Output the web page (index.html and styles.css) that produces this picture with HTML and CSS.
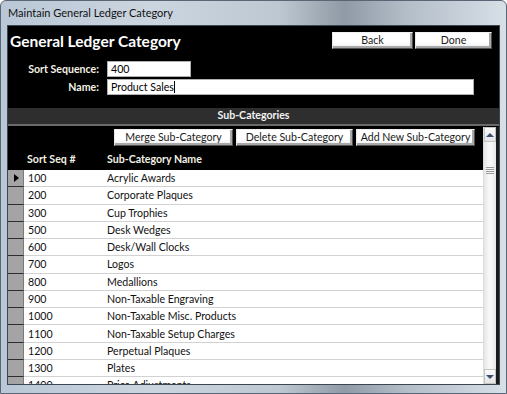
FILE: index.html
```html
<!DOCTYPE html>
<html lang="en">
<head>
    <meta charset="UTF-8">
    <title>Maintain General Ledger Category</title>
    <link rel="stylesheet" href="styles.css">
</head>
<body>
    <div class="window">
        <div class="titlebar">Maintain General Ledger Category</div>
        <div class="client">
            <div class="header">
                <div class="header-top">
                    <h1 class="form-title">General Ledger Category</h1>
                    <div class="nav-buttons">
                        <button class="btn btn-back">Back</button>
                        <button class="btn btn-done">Done</button>
                    </div>
                </div>
                <div class="field">
                    <label class="field-label">Sort Sequence:</label>
                    <div class="field-input input-short">400</div>
                </div>
                <div class="field">
                    <label class="field-label">Name:</label>
                    <div class="field-input input-long">Product Sales<span class="caret"></span></div>
                </div>
            </div>

            <div class="section-bar">Sub-Categories</div>

            <div class="subform">
                <div class="subform-main">
                    <div class="toolbar">
                        <button class="btn btn-merge">Merge Sub-Category</button>
                        <button class="btn btn-delete">Delete Sub-Category</button>
                        <button class="btn btn-add">Add New Sub-Category</button>
                    </div>
                    <div class="col-headers">
                        <span class="col-seq">Sort Seq #</span>
                        <span class="col-name">Sub-Category Name</span>
                    </div>
                    <div class="rows" id="rows"></div>
                </div>
                <div class="scrollbar">
                    <div class="sb-btn sb-up"><span class="tri-up"></span></div>
                    <div class="sb-track">
                        <div class="sb-thumb"><span class="grip"></span></div>
                    </div>
                    <div class="sb-btn sb-down"><span class="tri-down"></span></div>
                </div>
            </div>
        </div>
    </div>

    <script>
        const items = [
            ["100", "Acrylic Awards"],
            ["200", "Corporate Plaques"],
            ["300", "Cup Trophies"],
            ["500", "Desk Wedges"],
            ["600", "Desk/Wall Clocks"],
            ["700", "Logos"],
            ["800", "Medallions"],
            ["900", "Non-Taxable Engraving"],
            ["1000", "Non-Taxable Misc. Products"],
            ["1100", "Non-Taxable Setup Charges"],
            ["1200", "Perpetual Plaques"],
            ["1300", "Plates"],
            ["1400", "Price Adjustments"]
        ];

        const rows = document.getElementById("rows");
        items.forEach((item, i) => {
            const row = document.createElement("div");
            row.className = "row" + (i === 0 ? " current" : "");
            row.innerHTML =
                '<span class="selector"></span>' +
                '<span class="cell cell-seq">' + item[0] + '</span>' +
                '<span class="cell cell-name">' + item[1] + '</span>';
            rows.appendChild(row);
        });
    </script>
</body>
</html>
```

FILE: styles.css
```css
* {
    margin: 0;
    padding: 0;
    box-sizing: border-box;
}

body {
    width: 507px;
    height: 394px;
    overflow: hidden;
    background: #fff;
    font-family: Lato, "Open Sans", sans-serif;
    font-size: 10.6px;
}

.window {
    width: 507px;
    height: 394px;
    display: flex;
    flex-direction: column;
    padding: 0 6px 8px 6px;
    border: 1px solid #5a6675;
    border-radius: 6px 6px 0 0;
    background: linear-gradient(90deg, #b9c7d6 0%, #cbd5df 30%, #bec8d2 55%, #8f9aa6 68%, #b3bdc8 80%, #d7dfe7 100%);
}

.titlebar {
    height: 24px;
    flex-shrink: 0;
    padding: 5px 0 0 1px;
    font-size: 11px;
    color: #111;
}

.client {
    flex: 1;
    display: flex;
    flex-direction: column;
    background: #000;
    border: 1px solid #3c4652;
    overflow: hidden;
}

/* header */
.header {
    height: 82px;
    flex-shrink: 0;
    padding: 5px 7px 0 2px;
}

.header-top {
    display: flex;
    justify-content: space-between;
    align-items: flex-start;
}

.form-title {
    font-size: 15.5px;
    font-weight: bold;
    color: #fff;
    line-height: 20px;
}

.nav-buttons {
    display: flex;
    gap: 2px;
    margin-top: 1px;
}

.btn {
    flex-shrink: 0;
    height: 17px;
    font-family: inherit;
    font-size: 10.6px;
    color: #1a1a1a;
    background: linear-gradient(180deg, #ffffff 0%, #ffffff 60%, #ececec 100%);
    border: 1px solid;
    border-color: #f0f0f0 #505050 #505050 #e8e8e8;
    box-shadow: inset -2px -2px 0 #a8a8a8;
    line-height: 13px;
    padding-bottom: 1px;
}

.btn-back { width: 81px; }
.btn-done { width: 77px; }

.field {
    display: flex;
    align-items: center;
    margin-top: 2px;
}

.header-top + .field {
    margin-top: 10px;
}

.field-label {
    width: 89px;
    text-align: right;
    font-weight: bold;
    color: #f3f1e4;
}

.field-input {
    margin-left: 8px;
    height: 16px;
    background: #fff;
    border: 1px solid #b0b0b0;
    color: #000;
    padding: 0 3px;
    line-height: 14px;
}

.input-short { width: 84px; }
.input-long { width: 367px; }

.caret {
    display: inline-block;
    width: 1px;
    height: 12px;
    background: #000;
    vertical-align: -2px;
}

/* sub-categories band */
.section-bar {
    height: 18px;
    flex-shrink: 0;
    background: #2e2e2e;
    border-bottom: 2px solid #6a6a6a;
    color: #f2f2f2;
    font-weight: bold;
    text-align: center;
    line-height: 15px;
}

.subform {
    flex: 1;
    display: flex;
    min-height: 0;
}

.subform-main {
    flex: 1;
    display: flex;
    flex-direction: column;
    min-width: 0;
    overflow: hidden;
}

.toolbar {
    flex-shrink: 0;
    display: flex;
    gap: 3px;
    padding: 3px 0 0 106px;
}

.btn-merge { width: 119px; }
.btn-delete { width: 117px; }
.btn-add { width: 119px; }

.col-headers {
    flex-shrink: 0;
    height: 24px;
    display: flex;
    align-items: center;
    color: #f3f1e4;
    font-weight: bold;
    padding-top: 2px;
}

.col-seq {
    width: 99px;
    padding-left: 19px;
}

/* datasheet rows */
.rows {
    flex: 1;
    background: #fff;
}

.row {
    height: 17.28px;
    display: flex;
    align-items: center;
    border-bottom: 1px solid #d2d2d2;
    color: #111;
}

.selector {
    width: 16px;
    align-self: stretch;
    background: #a4a4a4;
    border-right: 1px solid #7a7a7a;
    border-bottom: 1px solid #2e2e2e;
    margin-bottom: -1px;
    display: flex;
    align-items: center;
    justify-content: center;
}

.row.current .selector::before {
    content: "";
    border-left: 5px solid #000;
    border-top: 4px solid transparent;
    border-bottom: 4px solid transparent;
    margin-left: 2px;
}

.cell-seq {
    width: 83px;
    padding-left: 4px;
}

/* scrollbar */
.scrollbar {
    width: 16px;
    display: flex;
    flex-direction: column;
    background: #f3f3f3;
    border-left: 1px solid #dcdcdc;
    border-right: 3px solid #1a1a1a;
    margin-top: 1px;
}

.sb-btn {
    height: 15px;
    flex-shrink: 0;
    border: 1px solid #c4c4c4;
    background: linear-gradient(180deg, #fafafa, #e4e4e4);
    display: flex;
    align-items: center;
    justify-content: center;
}

.tri-up {
    border-bottom: 4px solid #3d4f70;
    border-left: 4px solid transparent;
    border-right: 4px solid transparent;
}

.tri-down {
    border-top: 4px solid #3d4f70;
    border-left: 4px solid transparent;
    border-right: 4px solid transparent;
}

.sb-track {
    flex: 1;
    padding-top: 2px;
    background: linear-gradient(90deg, #e6e6e6, #f7f7f7 40%, #f7f7f7 60%, #e6e6e6);
}

.sb-thumb {
    height: 52px;
    display: flex;
    align-items: center;
    justify-content: center;
}

.grip {
    width: 8px;
    height: 7px;
    background: repeating-linear-gradient(180deg, #9a9a9a 0 1px, transparent 1px 2px);
}
```
